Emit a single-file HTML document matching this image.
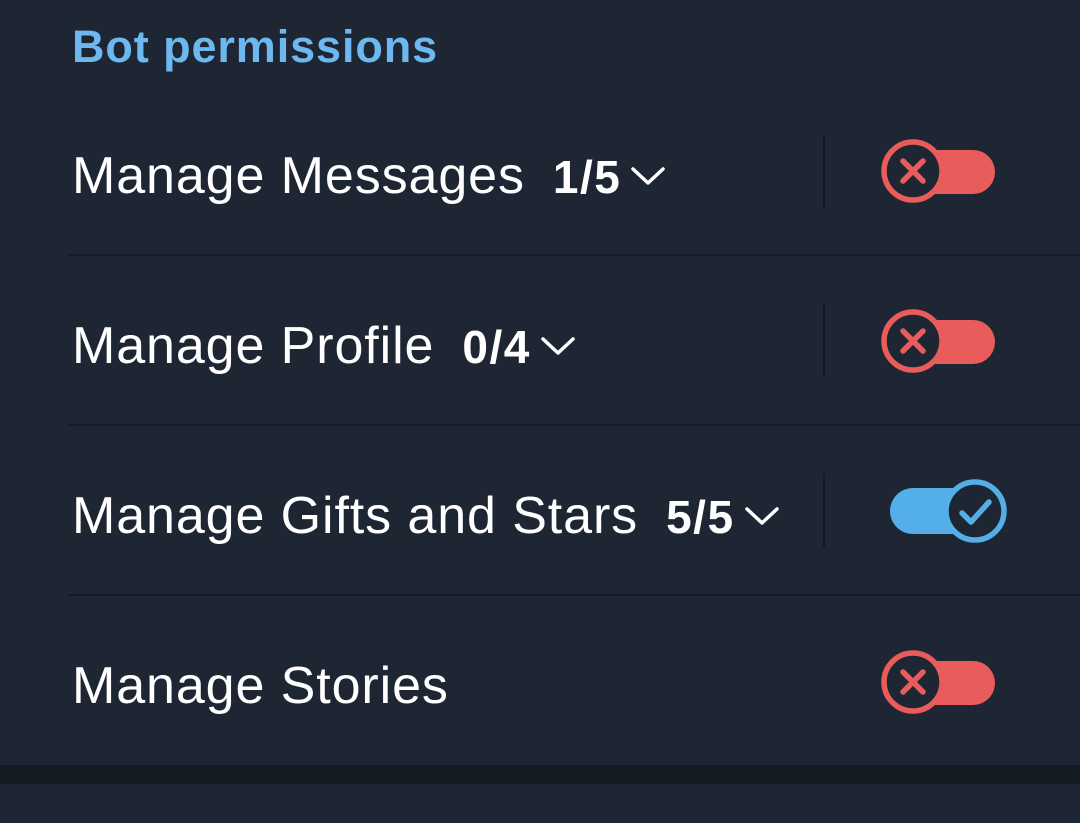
<!DOCTYPE html>
<html><head><meta charset="utf-8"><style>
html,body{margin:0;padding:0;background:#1e2633}
body{width:1080px;height:784px;position:relative;overflow:hidden;font-family:"Liberation Sans",sans-serif;color:#fff}
.t{position:absolute;left:72px;top:19px;font-size:45px;font-weight:bold;color:#6db8ef;line-height:56px;letter-spacing:0.9px}
.row{position:absolute;left:0;width:1080px;height:170px}
.lbl{position:absolute;left:72px;top:3px;line-height:60px;font-size:52px;letter-spacing:0.9px;white-space:nowrap}
.cnt{font-weight:bold;font-size:46px;letter-spacing:1.5px;margin-left:28px}
.chev{display:inline-block;vertical-align:middle;margin-left:9px;margin-top:-6px}
.vs{position:absolute;left:823px;width:2px;height:74px;background:#141a22}
.hd{position:absolute;left:68px;right:0;height:2px;background:#151b24}
.bot{position:absolute;left:0;top:765px;width:1080px;height:19px;background:#151b23}
</style></head><body>
<div class="t">Bot permissions</div>

<div class="row" style="top:143px"><div class="lbl">Manage Messages<span class="cnt">1/5</span><svg class="chev" width="36" height="22" viewBox="0 0 36 22"><path d="M3 4 L18 18 L33 4" fill="none" stroke="#fff" stroke-width="3.5" stroke-linecap="round" stroke-linejoin="round"/></svg></div></div>
<div class="vs" style="top:134px"></div>
<svg style="position:absolute;left:878px;top:136px" width="120" height="70" viewBox="0 0 120 70"><rect x="35" y="14" width="82" height="44" rx="22" fill="#e85c5c"/><circle cx="35" cy="35" r="29" fill="#1e2633" stroke="#e85c5c" stroke-width="5.5"/><path d="M25 25 L45 45 M45 25 L25 45" stroke="#e85c5c" stroke-width="5.5" stroke-linecap="round"/></svg>
<div class="hd" style="top:254px"></div>

<div class="row" style="top:313px"><div class="lbl">Manage Profile<span class="cnt">0/4</span><svg class="chev" width="36" height="22" viewBox="0 0 36 22"><path d="M3 4 L18 18 L33 4" fill="none" stroke="#fff" stroke-width="3.5" stroke-linecap="round" stroke-linejoin="round"/></svg></div></div>
<div class="vs" style="top:304px"></div>
<svg style="position:absolute;left:878px;top:306px" width="120" height="70" viewBox="0 0 120 70"><rect x="35" y="14" width="82" height="44" rx="22" fill="#e85c5c"/><circle cx="35" cy="35" r="29" fill="#1e2633" stroke="#e85c5c" stroke-width="5.5"/><path d="M25 25 L45 45 M45 25 L25 45" stroke="#e85c5c" stroke-width="5.5" stroke-linecap="round"/></svg>
<div class="hd" style="top:424px"></div>

<div class="row" style="top:483px"><div class="lbl">Manage Gifts and Stars<span class="cnt">5/5</span><svg class="chev" width="36" height="22" viewBox="0 0 36 22"><path d="M3 4 L18 18 L33 4" fill="none" stroke="#fff" stroke-width="3.5" stroke-linecap="round" stroke-linejoin="round"/></svg></div></div>
<div class="vs" style="top:474px"></div>
<svg style="position:absolute;left:885px;top:476px" width="125" height="70" viewBox="0 0 125 70"><rect x="5" y="12" width="90" height="46" rx="23" fill="#54aee8"/><circle cx="90" cy="35" r="29" fill="#1e2633" stroke="#54aee8" stroke-width="5.5"/><path d="M77 37 L86 46 L104 26" fill="none" stroke="#54aee8" stroke-width="5.5" stroke-linecap="round" stroke-linejoin="round"/></svg>
<div class="hd" style="top:594px"></div>

<div class="row" style="top:653px"><div class="lbl">Manage Stories</div></div>
<svg style="position:absolute;left:878px;top:647px" width="120" height="70" viewBox="0 0 120 70"><rect x="35" y="14" width="82" height="44" rx="22" fill="#e85c5c"/><circle cx="35" cy="35" r="29" fill="#1e2633" stroke="#e85c5c" stroke-width="5.5"/><path d="M25 25 L45 45 M45 25 L25 45" stroke="#e85c5c" stroke-width="5.5" stroke-linecap="round"/></svg>

<div class="bot"></div>
</body></html>
